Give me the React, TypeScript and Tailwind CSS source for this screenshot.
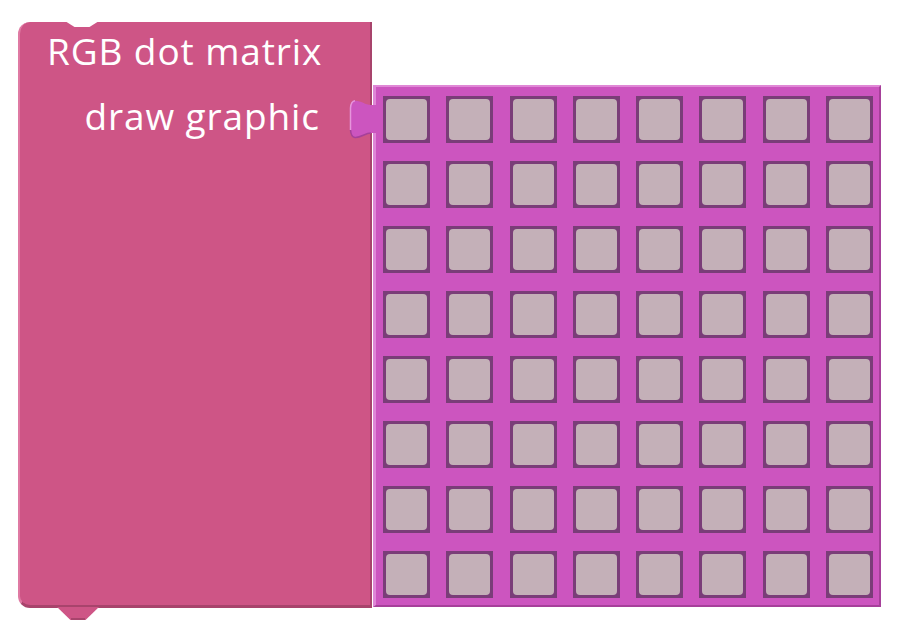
const ROWS = 8;
const COLS = 8;

export default function App() {
  return (
    <div className="min-h-screen bg-white flex items-start pl-[18px] pt-[22px]" style={{ fontFamily: '"Open Sans", "Noto Sans", sans-serif' }}>
      <BlockBody />
      <MatrixPanel />
    </div>
  );
}

function BlockBody() {
  return (
    <div className="relative w-[354px] h-[586px] bg-[#ce5586] rounded-l-[12px] border-l-[2px] border-l-[#df7aa3] border-r-[2px] border-r-[#a8446c] border-b-[3px] border-b-[#a8446c] shrink-0">
      {/* previous-statement notch */}
      <div className="absolute left-[45px] top-[-1px] w-[34px] h-[6px] bg-white [clip-path:polygon(0_0,100%_0,72%_100%,28%_100%)]" />
      {/* next-statement tab */}
      <div className="absolute left-[37px] bottom-[-15px] w-[42px] h-[13px] bg-[#ce5586] [clip-path:polygon(0_0,100%_0,68%_100%,32%_100%)]" />
      <div className="absolute left-[51px] bottom-[-15px] w-[14px] h-[2px] bg-[#a8446c]" />
      <div className="text-white text-[37px] tracking-[0.9px] leading-[65px] mt-[-4px]">
        <div className="pl-[27px]">RGB dot matrix</div>
        <div className="text-right pr-[50px]">draw graphic</div>
      </div>
    </div>
  );
}

function MatrixPanel() {
  return (
    <div className="relative mt-[63px] ml-[1px] w-[508px] h-[522px] bg-[#cc55bf] border-t-[2px] border-t-[#e088d6] border-l-[3px] border-l-[#df86d6] border-r-[2px] border-r-[#a6409a] border-b-[2px] border-b-[#a6409a] shrink-0">
      {/* output connector */}
      <svg className="absolute left-[-27px] top-[13px]" width="27" height="40" viewBox="0 0 27 40">
        <path d="M27 5 L22 5 C16 5 12 0.5 6 0.8 Q2 1.2 1.5 8 L1.5 30 Q2 37 6 37.5 C12 38 16 33 22 33 L27 33 Z" fill="#cc55bf" />
        <path d="M6 0.8 Q2 1.2 1.5 8 L1.5 30" fill="none" stroke="#e695dc" strokeWidth="1.5" />
        <path d="M1.5 30 Q2 37 6 37.5 C12 38 16 33 22 33" fill="none" stroke="#a6409a" strokeWidth="1.5" />
      </svg>
      <div className="grid grid-cols-[repeat(8,47px)] grid-rows-[repeat(8,47px)] gap-x-[16.3px] gap-y-[18px] pl-[7px] pt-[9px]">
        {Array.from({ length: ROWS * COLS }).map((_, i) => (
          <div key={i} className="bg-[#7a3d78] p-[3px]">
            <div className="w-full h-full bg-[#c4b0b8] rounded-[4px]" />
          </div>
        ))}
      </div>
    </div>
  );
}
